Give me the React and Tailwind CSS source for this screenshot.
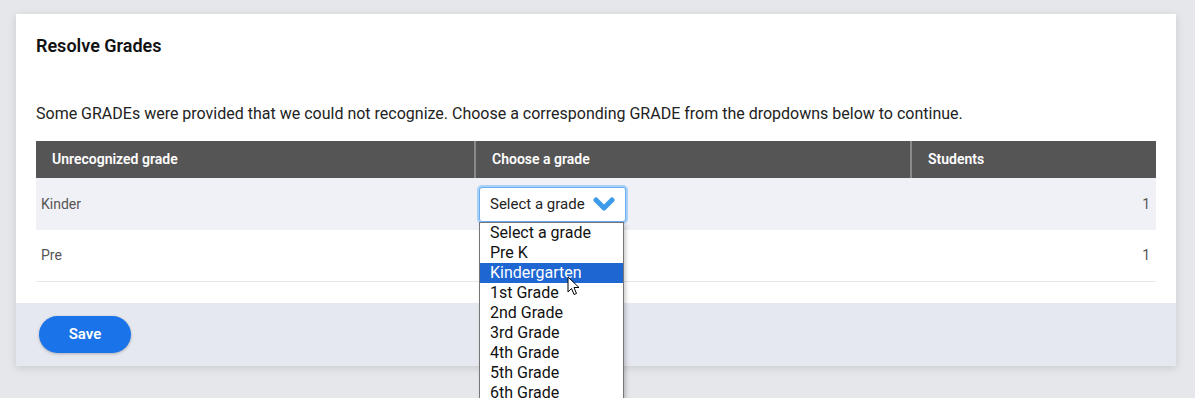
import React from "react";

const grades = [
  "Select a grade",
  "Pre K",
  "Kindergarten",
  "1st Grade",
  "2nd Grade",
  "3rd Grade",
  "4th Grade",
  "5th Grade",
  "6th Grade",
  "7th Grade",
];

const rows = [
  { name: "Kinder", count: 1, open: true },
  { name: "Pre", count: 1 },
];

const Chevron = () => (
  <svg width="22" height="14" viewBox="0 0 22 14" className="shrink-0">
    <polyline points="3,3 11,11 19,3" fill="none" stroke="#3d9be9" strokeWidth="5" strokeLinecap="round" strokeLinejoin="round" />
  </svg>
);

const Cursor = () => (
  <svg width="14" height="20" viewBox="0 0 14 20" className="absolute left-[87px] top-[53px]">
    <path d="M1 1 L1 16 L4.5 12.5 L7 18.5 L9.5 17.5 L7 11.5 L12 11.5 Z" fill="#fff" stroke="#000" strokeWidth="1" strokeLinejoin="round" />
  </svg>
);

const GradeSelect = ({ open }) => (
  <div className="relative w-[147px]">
    <div className="h-[35px] flex items-center justify-between pl-[10px] pr-[10px] bg-white rounded-[3px] border border-[#68aef0] ring-2 ring-[#a9d1f7] text-[15px] text-[#222]">
      <span>Select a grade</span>
      <Chevron />
    </div>
    {open && (
      <div className="absolute left-0 top-[35px] w-[145px] z-20 bg-white border border-[#767676] shadow-[2px_2px_4px_rgba(0,0,0,0.2)] text-[16px] text-[#111]">
        {grades.map((g) => (
          <div
            key={g}
            className={
              g === "Kindergarten"
                ? "h-[20px] leading-[20px] pl-[10px] bg-[#1e66d2] text-white"
                : "h-[20px] leading-[20px] pl-[10px]"
            }
          >
            {g}
          </div>
        ))}
        <Cursor />
      </div>
    )}
  </div>
);

export default function App() {
  return (
    <div className="h-[398px] overflow-hidden bg-[#e6e7eb] pt-[14px] px-[16px] font-['Roboto',_'Liberation_Sans',_sans-serif]">
      <div className="w-[1160px] bg-white shadow-[0_2px_8px_rgba(0,0,0,0.12)]">
        <div className="px-[20px] pt-[20px] pb-[21px]">
          <h1 className="text-[18px] leading-[24px] font-semibold text-[#111]">Resolve Grades</h1>
          <p className="mt-[46px] text-[16px] leading-[20px] text-[#222]">
            Some GRADEs were provided that we could not recognize. Choose a corresponding GRADE from the dropdowns below to continue.
          </p>
          <div className="mt-[17px]">
            <div className="grid grid-cols-[438px_436px_1fr] h-[37px] bg-[#555555] text-white text-[14px] font-semibold">
              <div className="flex items-center pl-[16px]">Unrecognized grade</div>
              <div className="flex items-center pl-[16px] border-l-2 border-[#8a8a8a]">Choose a grade</div>
              <div className="flex items-center pl-[16px] border-l-2 border-[#8a8a8a]">Students</div>
            </div>
            {rows.map((r, i) => (
              <div
                key={r.name}
                className={
                  i % 2 === 0
                    ? "grid grid-cols-[438px_436px_1fr] h-[52px] bg-[#f0f1f6] text-[14px] text-[#555]"
                    : "grid grid-cols-[438px_436px_1fr] h-[52px] bg-white border-b border-[#e6e7eb] text-[14px] text-[#555]"
                }
              >
                <div className="flex items-center pl-[5px]">{r.name}</div>
                <div className="flex items-center pl-[5px]">{i === 0 && <GradeSelect open={r.open} />}</div>
                <div className="flex items-center justify-end pr-[6px] text-[14px]">{r.count}</div>
              </div>
            ))}
          </div>
        </div>
        <div className="h-[63px] bg-[#e6e8f0] flex items-center px-[23px]">
          <button className="w-[92px] h-[37px] rounded-full bg-[#1a73e8] text-white text-[15px] font-semibold shadow-[0_1px_3px_rgba(0,0,0,0.25)]">
            Save
          </button>
        </div>
      </div>
    </div>
  );
}
